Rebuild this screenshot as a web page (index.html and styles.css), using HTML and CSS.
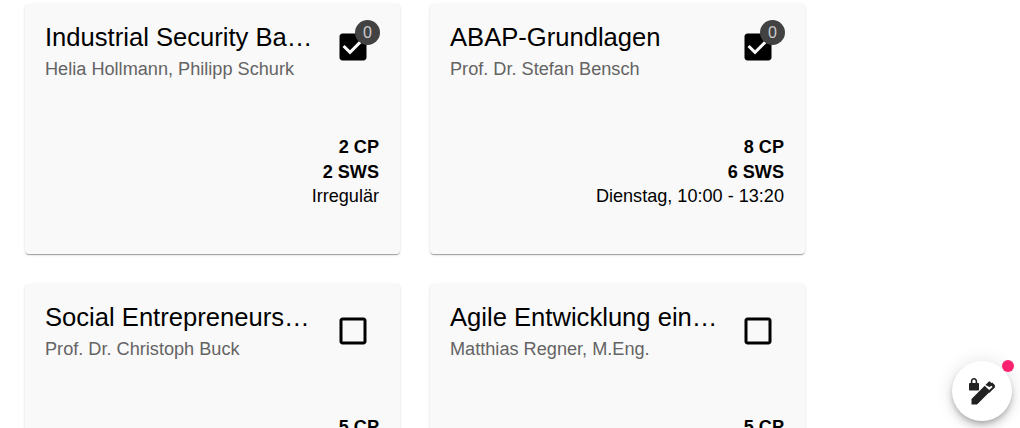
FILE: index.html
```html
<!DOCTYPE html>
<html lang="de">
<head>
<meta charset="utf-8">
<title>Kurse</title>
<link rel="stylesheet" href="styles.css">
</head>
<body>
<main class="grid">
  <article class="card">
    <div class="head">
      <div class="titles">
        <h2 class="title">Industrial Security Basics</h2>
        <p class="people">Helia Hollmann, Philipp Schurk</p>
      </div>
      <div class="check check-badged">
        <svg class="box" viewBox="0 0 24 24"><path d="M19 3H5c-1.11 0-2 .9-2 2v14c0 1.1.89 2 2 2h14c1.1 0 2-.9 2-2V5c0-1.1-.9-2-2-2zm-9 14l-5-5 1.41-1.41L10 14.17l7.59-7.59L19 8l-9 9z"/></svg>
        <span class="badge">0</span>
      </div>
    </div>
    <div class="meta">
      <strong>2 CP</strong>
      <strong>2 SWS</strong>
      <span>Irregulär</span>
    </div>
  </article>
  <article class="card">
    <div class="head">
      <div class="titles">
        <h2 class="title">ABAP-Grundlagen</h2>
        <p class="people">Prof. Dr. Stefan Bensch</p>
      </div>
      <div class="check check-badged">
        <svg class="box" viewBox="0 0 24 24"><path d="M19 3H5c-1.11 0-2 .9-2 2v14c0 1.1.89 2 2 2h14c1.1 0 2-.9 2-2V5c0-1.1-.9-2-2-2zm-9 14l-5-5 1.41-1.41L10 14.17l7.59-7.59L19 8l-9 9z"/></svg>
        <span class="badge">0</span>
      </div>
    </div>
    <div class="meta">
      <strong>8 CP</strong>
      <strong>6 SWS</strong>
      <span>Dienstag, 10:00 - 13:20</span>
    </div>
  </article>
  <article class="card">
    <div class="head">
      <div class="titles">
        <h2 class="title">Social Entrepreneurship Praxis</h2>
        <p class="people">Prof. Dr. Christoph Buck</p>
      </div>
      <div class="check">
        <svg class="box" viewBox="0 0 24 24"><path d="M19 5v14H5V5h14m0-2H5c-1.1 0-2 .9-2 2v14c0 1.1.9 2 2 2h14c1.1 0 2-.9 2-2V5c0-1.1-.9-2-2-2z"/></svg>
      </div>
    </div>
    <div class="meta">
      <strong>5 CP</strong>
    </div>
  </article>
  <article class="card">
    <div class="head">
      <div class="titles">
        <h2 class="title">Agile Entwicklung eingebetteter Systeme</h2>
        <p class="people">Matthias Regner, M.Eng.</p>
      </div>
      <div class="check">
        <svg class="box" viewBox="0 0 24 24"><path d="M19 5v14H5V5h14m0-2H5c-1.1 0-2 .9-2 2v14c0 1.1.9 2 2 2h14c1.1 0 2-.9 2-2V5c0-1.1-.9-2-2-2z"/></svg>
      </div>
    </div>
    <div class="meta">
      <strong>5 CP</strong>
    </div>
  </article>
</main>
<button class="fab" type="button" aria-label="Bearbeiten">
  <svg class="fab-icon" viewBox="0 0 32 32">
    <path d="M3 9c0-.6.4-1 1-1h.8V6.500C4.800 4.500 6.200 3 8 3s3.200 1.500 3.200 3.500V8h.8c.6 0 1 .4 1 1v5.500c0 .6-.4 1-1 1H4c-.6 0-1-.4-1-1zM6.400 8h3.200V6.500C9.600 5.400 8.900 4.600 8 4.600s-1.600.8-1.600 1.900z"/>
    <path d="M5.500 29.500v-5.500L18.700 10.700l5.600 5.600L11 29.500zM19.400 10l3-3c.6-.6 1.400-.6 2 0l.9.9.9-.4 2.800 2.800-.4 1 .7.7-6.100 6.100-1.700-1.700 5.100-4.400-1.200-1.200-2 1.100z"/>
  </svg>
  <span class="dot"></span>
</button>
</body>
</html>
```
FILE: styles.css
```css
* { box-sizing: border-box; }
html, body { margin: 0; height: 100%; overflow: hidden; background: #fff; }
body { font-family: "Liberation Sans", Arial, sans-serif; color: #000; }

.grid {
  display: grid;
  grid-template-columns: 375px 375px;
  grid-auto-rows: 250px;
  gap: 30px;
  padding: 4px 0 0 25px;
}
.card {
  display: flex;
  flex-direction: column;
  background: #f9f9f9;
  border-radius: 4px;
  padding: 19px 21px 20px 20px;
  box-shadow: 0 2px 1px -1px rgba(0,0,0,.2), 0 1px 1px 0 rgba(0,0,0,.14), 0 1px 3px 0 rgba(0,0,0,.12);
}
.head { display: flex; justify-content: space-between; }
.titles { width: 269px; min-width: 0; }
.title {
  margin: 0;
  font-size: 25.600px;
  font-weight: 400;
  line-height: 28px;
  white-space: nowrap;
  overflow: hidden;
  text-overflow: ellipsis;
}
.people { margin: 6px 0 0; font-size: 18.150px; line-height: 24px; color: #646464; }
.check { position: relative; width: 36px; height: 36px; margin: 10px 8px 0 0; flex: none; }
.check-badged { margin-top: 6px; margin-bottom: 4px; }
.box { display: block; width: 36px; height: 36px; fill: #000; }
.badge {
  position: absolute;
  top: -9px;
  right: -9px;
  width: 25px;
  height: 25px;
  border-radius: 50%;
  background: #424242;
  color: #ccc;
  font-size: 16px;
  line-height: 25px;
  text-align: center;
}
.meta {
  display: flex;
  flex-direction: column;
  align-items: flex-end;
  margin-top: 54px;
  font-size: 18.100px;
  line-height: 25px;
}
.meta span { margin-top: -1px; }
.fab {
  position: fixed;
  left: 952px;
  top: 361px;
  width: 60px;
  height: 60px;
  padding: 0;
  border: 0;
  border-radius: 50%;
  background: #fff;
  display: flex;
  align-items: center;
  justify-content: center;
  box-shadow: 0 3px 5px -1px rgba(0,0,0,.2), 0 6px 10px 0 rgba(0,0,0,.14), 0 1px 18px 0 rgba(0,0,0,.12);
}
.fab-icon { width: 32px; height: 32px; fill: #212121; }
.dot {
  position: absolute;
  top: -1px;
  right: -2px;
  width: 12px;
  height: 12px;
  border-radius: 50%;
  background: #fb2270;
}
```
